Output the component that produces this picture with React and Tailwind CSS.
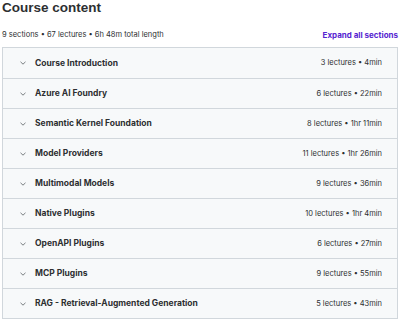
const sections = [
  { title: 'Course Introduction', meta: '3 lectures • 4min' },
  { title: 'Azure AI Foundry', meta: '6 lectures • 22min' },
  { title: 'Semantic Kernel Foundation', meta: '8 lectures • 1hr 11min' },
  { title: 'Model Providers', meta: '11 lectures • 1hr 26min' },
  { title: 'Multimodal Models', meta: '9 lectures • 36min' },
  { title: 'Native Plugins', meta: '10 lectures • 1hr 4min' },
  { title: 'OpenAPI Plugins', meta: '6 lectures • 27min' },
  { title: 'MCP Plugins', meta: '9 lectures • 55min' },
  { title: 'RAG - Retrieval-Augmented Generation', meta: '5 lectures • 43min' },
];

function Chevron() {
  return (
    <svg width="8" height="8" viewBox="0 0 8 8" className="text-[#6a6f73]">
      <path d="M1.5 2.8 L4 5.2 L6.5 2.8" fill="none" stroke="currentColor" strokeWidth="0.9" />
    </svg>
  );
}

export default function App() {
  return (
    <div className="w-[400px] h-[322px] bg-white overflow-hidden text-[#2d2f31]" style={{ fontFamily: 'Inter, "Noto Sans", sans-serif' }}>
      <h2
        className="px-[2px] text-[13.5px] leading-[16px] font-bold"
        style={{ fontFamily: '"Liberation Sans", Arial, sans-serif' }}
      >
        Course content
      </h2>
      <div className="flex items-end justify-between px-[2px] mt-[12px] h-[14px]">
        <span className="text-[7.5px] leading-[14px] text-[#2d2f31]">9 sections • 67 lectures • 6h 48m total length</span>
        <span className="text-[8px] leading-[14px] font-bold text-[#5624d0]">Expand all sections</span>
      </div>
      <div className="mx-[2px] mt-[5px] border border-[#d1d7dc]">
        {sections.map((s, i) => (
          <div
            key={s.title}
            className={`flex items-center h-[30px] bg-[#f7f9fa] pl-[16px] pr-[15px] ${i > 0 ? 'border-t border-[#d1d7dc]' : ''}`}
          >
            <Chevron />
            <span className="ml-[8px] text-[8.5px] font-bold flex-1">{s.title}</span>
            <span className="text-[7.5px] text-[#2d2f31]">{s.meta}</span>
          </div>
        ))}
      </div>
    </div>
  );
}
